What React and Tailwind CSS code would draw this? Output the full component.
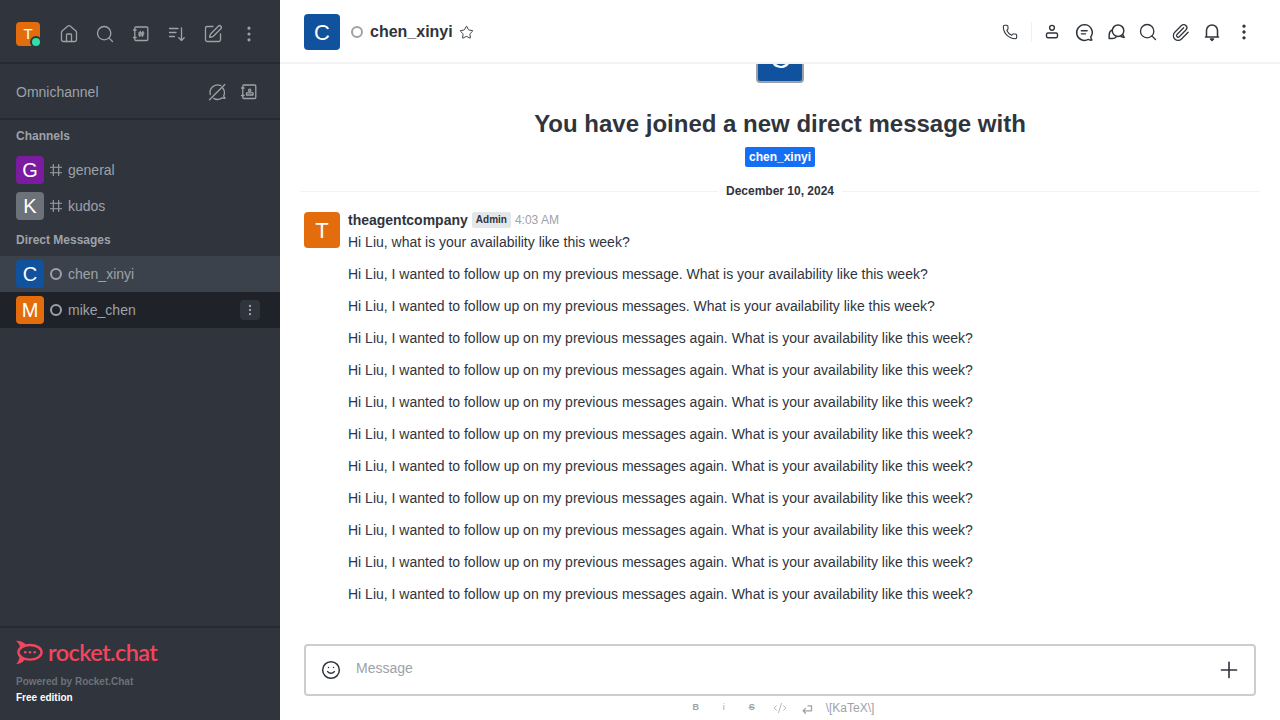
import React from 'react';
import { House, Search, SquarePen, EllipsisVertical, Phone, Star, Paperclip, Smile, Plus, CodeXml } from 'lucide-react';

const SANS = "font-['Liberation_Sans',Arial,sans-serif]";

const Svg = ({ size = 20, width = 1.3, children, className = '' }) => (
    <svg width={size} height={size} viewBox="0 0 20 20" fill="none" stroke="currentColor" strokeWidth={width} strokeLinecap="round" strokeLinejoin="round" className={className}>{children}</svg>
);

const DirectoryIcon = () => (
    <Svg>
        <rect x="3.8" y="3" width="13" height="13.500" rx="1" />
        <path d="M2.500 6h2.600M2.500 13.500h2.600M9.300 7.300l-.6 5M11.900 7.300l-.6 5M7.800 9h5M7.600 10.800h5" />
    </Svg>
);

const SortIcon = () => (
    <Svg>
        <path d="M2.500 4.500h8.500M2.500 8.500h6.500M2.500 12.500h5M14.500 4v12.500M11.800 13.800l2.700 2.700 2.700-2.700" />
    </Svg>
);

const HashIcon = () => (
    <Svg size={12} width={1.800} className="text-[#9ea2a8] shrink-0">
        <path d="M5.500.5v19M14.500.5v19M.5 5.500h19M.5 14.500h19" />
    </Svg>
);

const OmniOffIcon = () => (
    <Svg>
        <path d="M15.500 5.800a7.600 7.600 0 0 1 1.200 8.200c.3.900.8 1.600 1.400 2.200-1 .1-2 0-3-.4a7.600 7.600 0 0 1-8.400.6M3.300 12.500A7.600 7.600 0 0 1 13.800 3.600M17.800 2.500 2.500 17.800" />
    </Svg>
);

const ContactIcon = () => (
    <Svg>
        <rect x="3.800" y="3" width="13" height="13.500" rx="1" />
        <path d="M2.500 6h2.600M2.500 13.500h2.600M7.500 13h6.500v-2.200H7.500z" />
        <circle cx="10.700" cy="8.300" r="1.200" />
    </Svg>
);

const UserIcon = () => (
    <Svg width={1.400}>
        <circle cx="10" cy="5.800" r="2.400" />
        <rect x="4.500" y="11" width="11" height="4.800" rx="1.500" />
    </Svg>
);

const ThreadIcon = () => (
    <Svg size={21} width={1.400}>
        <path d="M10 2.500a7.500 7.500 0 1 0 3.600 14.100c1 .6 2.200.8 3.400.6-.6-.8-1-1.800-1-2.900A7.500 7.500 0 0 0 10 2.500z" />
        <path d="M7 8.300h5.500M7 11.300h4" />
    </Svg>
);

const DiscussionIcon = () => (
    <Svg size={21} width={1.400}>
        <circle cx="11.500" cy="8.300" r="5.500" />
        <path d="M5.900 7.500C4 8.500 3 10.300 3 12.300v3.400h3.300c1.200 0 2.300-.4 3.200-1.200M16 12l1.300 2.800-3-.9" />
    </Svg>
);

const BellIcon = () => (
    <Svg width={1.500}>
        <path d="M4.500 14.800V8.500a5.500 5.500 0 0 1 11 0v6.300M3.500 15h13" />
        <path d="M8.500 17h3l-1.500 1.400z" fill="currentColor" />
    </Svg>
);

const ReturnIcon = () => (
    <Svg size={14} width={1.800}>
        <path d="M3 14h12V7H10M6.500 10.500 3 14l3.500 3.500" />
    </Svg>
);

const RocketLogo = () => (
    <svg width="28" height="25" viewBox="0 0 28 25" fill="none" className="shrink-0">
        <ellipse cx="14" cy="12.300" rx="11.600" ry="7.300" stroke="#f5455c" strokeWidth="2.400" />
        <path d="M0 .8C3.500.6 7.500 2 10 4.500L4.500 8.500C4.300 6 2.500 3 0 .8z" fill="#f5455c" />
        <path d="M3.500 15.500 8.500 20C6.500 22.500 3.500 24 .3 24c2-2 3.300-5 3.200-8.500z" fill="#f5455c" />
        <circle cx="9.300" cy="12.300" r="1.300" fill="#f5455c" />
        <circle cx="14" cy="12.300" r="1.300" fill="#f5455c" />
        <circle cx="18.700" cy="12.300" r="1.300" fill="#f5455c" />
    </svg>
);

const Avatar = ({ letter, color, size }) => (
    <div className={`${size} ${color} rounded flex items-center justify-center text-white shrink-0`}>{letter}</div>
);

const Status = () => <span className="block w-3 h-3 rounded-full border-2 border-[#9ea2a8] shrink-0"></span>;

const Slot = ({ children }) => <span className="w-8 h-8 flex items-center justify-center shrink-0">{children}</span>;

const RoomRow = ({ letter, color, name, kind, active, hover }) => (
    <div className={`h-9 flex items-center pl-4 pr-5 gap-1.5 ${active ? 'bg-[#3c424c]' : ''} ${hover ? 'bg-[#1f2329]' : ''}`}>
        <Avatar letter={letter} color={color} size="w-7 h-7 text-[20px]" />
        {kind === 'channel' ? <HashIcon /> : <Status />}
        <span className="text-sm text-[#9ea2a8] flex-1">{name}</span>
        {hover && (
            <span className="w-5 h-5 rounded bg-[#2f343d] flex items-center justify-center text-[#9ea2a8]"><EllipsisVertical size={14} /></span>
        )}
    </div>
);

const AGAIN = 'Hi Liu, I wanted to follow up on my previous messages again. What is your availability like this week?';
const MESSAGES = [
    'Hi Liu, I wanted to follow up on my previous message. What is your availability like this week?',
    'Hi Liu, I wanted to follow up on my previous messages. What is your availability like this week?',
    AGAIN, AGAIN, AGAIN, AGAIN, AGAIN, AGAIN, AGAIN, AGAIN, AGAIN,
];

const App = () => {
    return (
        <div className={`h-screen w-full flex overflow-hidden bg-white ${SANS}`}>
            <aside className="w-[280px] shrink-0 bg-[#2f343d] flex flex-col">
                <div className="h-16 border-b-2 border-[#262a31] flex items-center pl-4 pr-[21px] pt-1.5 justify-between shrink-0 text-[#9ea2a8]">
                    <div className="relative">
                        <Avatar letter="T" color="bg-[#e36c0c]" size="w-6 h-6 text-[15px]" />
                        <span className="absolute -right-0.5 -bottom-0.5 w-3 h-3 rounded-full bg-[#2de0a5] border-2 border-[#2f343d]"></span>
                    </div>
                    <div className="flex items-center gap-4">
                        <House size={20} strokeWidth={1.6} />
                        <Search size={20} strokeWidth={1.6} />
                        <DirectoryIcon />
                        <SortIcon />
                        <SquarePen size={20} strokeWidth={1.6} />
                        <EllipsisVertical size={20} strokeWidth={1.8} />
                    </div>
                </div>
                <div className="h-14 border-b-2 border-[#262a31] flex items-center pl-4 pr-[21px] pt-0.5 justify-between shrink-0 text-[#9ea2a8]">
                    <span className="text-sm">Omnichannel</span>
                    <div className="flex items-center gap-3">
                        <OmniOffIcon />
                        <ContactIcon />
                    </div>
                </div>
                <div className="flex-1">
                    <div className="h-8 pl-4 flex items-center text-xs font-bold text-[#9ea2a8]">Channels</div>
                    <RoomRow letter="G" color="bg-[#7a1ba0]" name="general" kind="channel" />
                    <RoomRow letter="K" color="bg-[#6c727a]" name="kudos" kind="channel" />
                    <div className="h-8 pl-4 flex items-center text-xs font-bold text-[#9ea2a8]">Direct Messages</div>
                    <RoomRow letter="C" color="bg-[#10529e]" name="chen_xinyi" active />
                    <RoomRow letter="M" color="bg-[#e36c0c]" name="mike_chen" hover />
                </div>
                <div className="h-[94px] border-t-2 border-[#262a31] pl-4 pt-[12px] shrink-0">
                    <div className="flex items-center gap-1 h-[25px]">
                        <RocketLogo />
                        <span className="text-[23.5px] leading-6 text-[#f5455c] font-['Lato',sans-serif] font-semibold tracking-tight -mt-0.5">rocket.chat</span>
                    </div>
                    <div className="text-[10px] font-bold text-[#6c727a] mt-[9px] leading-4">Powered by Rocket.Chat</div>
                    <div className="text-[10px] font-bold text-white leading-4">Free edition</div>
                </div>
            </aside>
            <main className="flex-1 min-w-0 flex flex-col">
                <header className="h-16 shrink-0 border-b-2 border-[#f2f3f5] flex items-center pl-6 pr-5 pt-0.5">
                    <Avatar letter="C" color="bg-[#10529e]" size="w-9 h-9 text-[22px]" />
                    <span className="ml-[11px]"><Status /></span>
                    <span className="ml-[7px] text-base font-bold text-[#2f343d]">chen_xinyi</span>
                    <Star size={15} strokeWidth={1.5} className="ml-1.5 text-[#2f343d]" />
                    <div className="ml-auto flex items-center text-[#2f343d]">
                        <Slot><Phone size={16} strokeWidth={1.6} /></Slot>
                        <span className="w-px h-5 bg-[#eef0f2] ml-[5px] mr-1"></span>
                        <Slot><UserIcon /></Slot>
                        <Slot><ThreadIcon /></Slot>
                        <Slot><DiscussionIcon /></Slot>
                        <Slot><Search size={20} strokeWidth={1.6} /></Slot>
                        <Slot><Paperclip size={19} strokeWidth={1.6} /></Slot>
                        <Slot><BellIcon /></Slot>
                        <Slot><EllipsisVertical size={20} strokeWidth={2} /></Slot>
                    </div>
                </header>
                <div className="flex-1 min-h-0 overflow-hidden flex flex-col justify-end px-5 pb-10">
                    <div className="flex flex-col items-center shrink-0">
                        <div className="w-12 h-12 rounded bg-[#10529e] border-2 border-[#9ea2a8] flex items-center justify-center text-[28px] text-white">C</div>
                        <h1 className="mt-[25px] text-2xl font-bold text-[#2f343d] leading-8">You have joined a new direct message with</h1>
                        <span className="mt-[7px] px-1 rounded-[2px] bg-[#156ff5] text-white text-xs font-bold leading-5">chen_xinyi</span>
                    </div>
                    <div className="flex items-center gap-2 mt-4 shrink-0">
                        <span className="flex-1 h-px bg-[#f2f3f5]"></span>
                        <span className="text-xs font-bold text-[#2f343d]">December 10, 2024</span>
                        <span className="flex-1 h-px bg-[#f2f3f5]"></span>
                    </div>
                    <div className="mt-[13px] px-1 flex gap-2 shrink-0">
                        <Avatar letter="T" color="bg-[#e36c0c]" size="w-9 h-9 text-[22px]" />
                        <div className="min-w-0">
                            <div className="flex items-center h-4">
                                <span className="text-sm font-bold text-[#2f343d]">theagentcompany</span>
                                <span className="ml-1 px-1 rounded-[2px] bg-[#e4e7ea] text-[10px] font-bold text-[#2f343d] leading-4">Admin</span>
                                <span className="ml-1 text-xs text-[#9ea2a8]">4:03 AM</span>
                            </div>
                            <p className="text-sm text-[#2f343d] leading-5 mt-1">Hi Liu, what is your availability like this week?</p>
                        </div>
                    </div>
                    <div className="pl-12 shrink-0">
                        {MESSAGES.map((m, i) => (
                            <p key={i} className="text-sm text-[#2f343d] leading-5 mt-3">{m}</p>
                        ))}
                    </div>
                </div>
                <div className="px-6 shrink-0">
                    <div className="h-[52px] border-2 border-[#cbced1] rounded flex items-center pl-[15px] pr-[12px]">
                        <Smile size={20} strokeWidth={1.8} className="text-[#2f343d]" />
                        <span className="ml-[15px] text-sm text-[#9ea2a8] flex-1 -mt-1">Message</span>
                        <Plus size={26} strokeWidth={1.5} className="text-[#2f343d]" />
                    </div>
                </div>
                <div className="h-6 shrink-0 flex items-center justify-center text-[#9ea2a8] mr-1">
                    <span className="w-7 text-center text-[9px] font-bold">B</span>
                    <span className="w-7 text-center text-[9px]">i</span>
                    <span className="w-7 text-center text-[9px] font-bold line-through">S</span>
                    <span className="w-7 flex justify-center"><CodeXml size={14} strokeWidth={1.3} /></span>
                    <span className="w-7 flex justify-center"><ReturnIcon /></span>
                    <span className="text-xs ml-1">\[KaTeX\]</span>
                </div>
            </main>
        </div>
    );
};

export default App;
